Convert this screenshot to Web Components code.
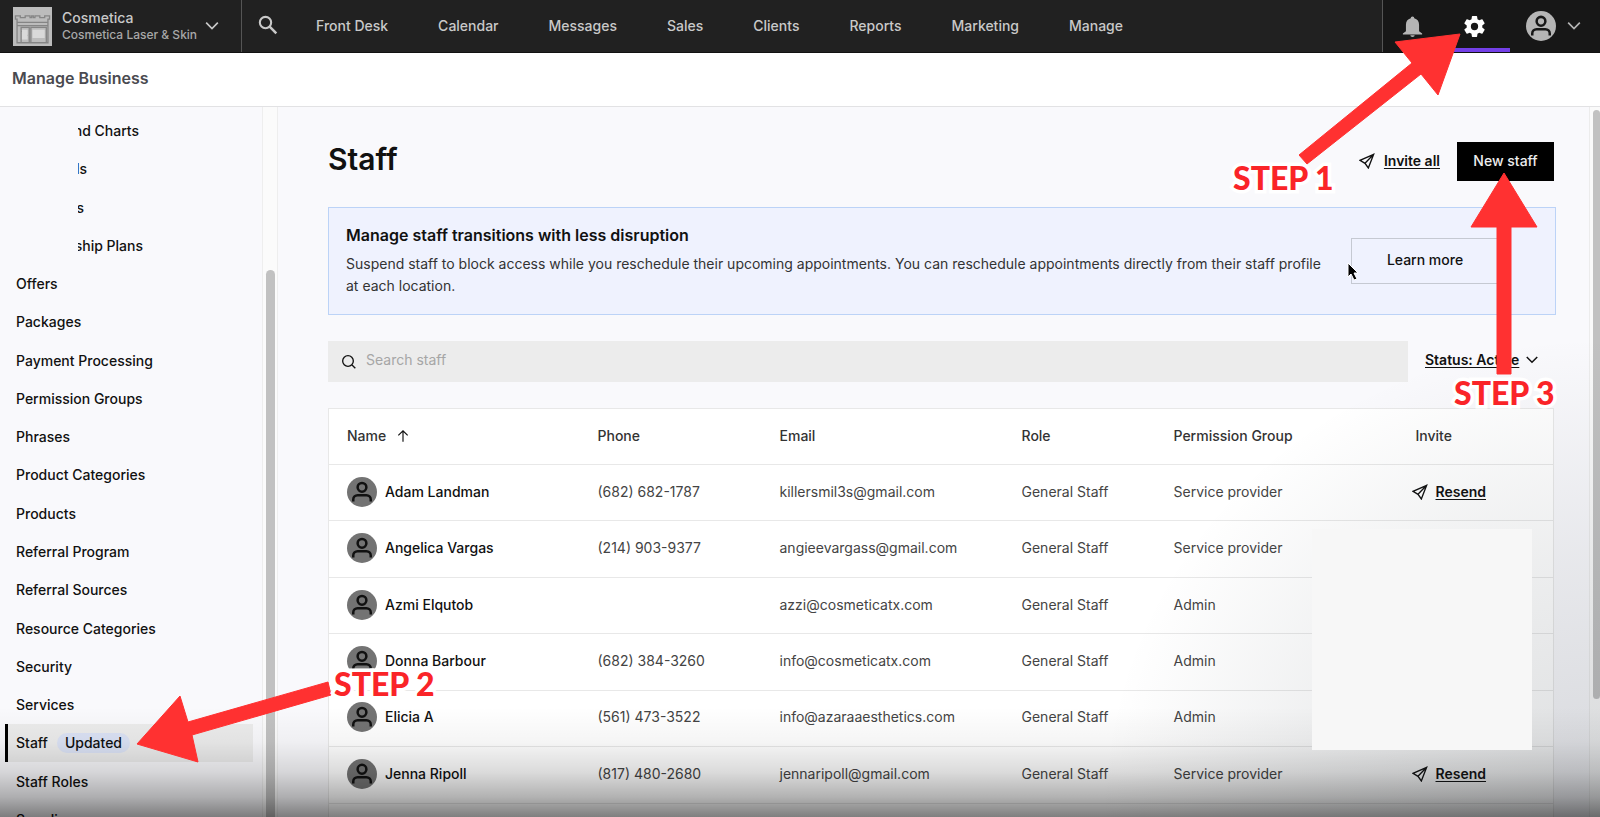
<!DOCTYPE html>
<html lang="en">
<head>
  <meta charset="utf-8">
  <title>Manage Business - Staff</title>
  <style>
    html, body { height: 100%; margin: 0; overflow: hidden; }
    body { font: 500 14px/20px Inter, "Open Sans", sans-serif; color: #111; background: #f9f9fc; }
  </style>
  <script>
    window.onload = () => {
      // icon paths, all on a 24x24 grid
      const icons = {
        chevron: '<path d="M5 8l7 7 7-7"/>',
        search: '<circle cx="10.5" cy="10.5" r="8"/><path d="M16.5 16.5l5 5"/>',
        glass: '<circle cx="9" cy="9" r="6.8" stroke-width="2.5"/><path d="M14 14l8 8" stroke-width="3"/>',
        send: '<path d="M22 2L1.500 11l7.500 4.500L14 22.500zM9 15.500L22 2"/>',
        arrow: '<path d="M12 22V3M4 11l8-8 8 8"/>',
        bell: '<path fill="currentColor" stroke="none" d="M12 .5a2 2 0 0 0-2 2.200C6.300 3.600 4.500 6.500 4.500 10v7.500L1 20v1h22v-1l-3.500-2.500V10c0-3.500-1.800-6.400-5.500-7.300A2 2 0 0 0 12 .5zM9.500 22a2.500 2 0 0 0 5 0z"/>',
        gear: '<path fill="currentColor" stroke="none" fill-rule="evenodd" d="M19.430 12.980c.04-.32.070-.64.070-.98s-.03-.66-.07-.98l2.110-1.650c.19-.15.240-.42.120-.64l-2-3.460c-.12-.22-.39-.3-.61-.22l-2.490 1c-.52-.4-1.080-.73-1.690-.98l-.38-2.650C14.460 2.180 14.250 2 14 2h-4c-.25 0-.46.180-.49.420l-.38 2.650c-.61.250-1.170.590-1.690.980l-2.490-1c-.23-.09-.49 0-.61.220l-2 3.460c-.13.220-.07.490.120.640l2.110 1.650c-.04.320-.07.650-.07.980s.03.660.070.980l-2.110 1.650c-.19.150-.24.420-.12.640l2 3.460c.12.220.390.300.610.220l2.490-1c.52.400 1.080.730 1.690.980l.38 2.650c.03.240.240.420.490.420h4c.25 0 .46-.18.490-.42l.38-2.650c.61-.25 1.170-.59 1.690-.98l2.490 1c.23.090.490 0 .61-.22l2-3.460c.12-.22.070-.49-.12-.64zM12 15.500A3.500 3.500 0 1 1 12 8.500a3.500 3.500 0 0 1 0 7z"/>',
        person: '<circle cx="12" cy="12" r="12" fill="currentColor" stroke="none"/><g stroke="var(--figure, #111)" stroke-width="2"><circle cx="12" cy="8.200" r="3.500"/><path d="M5 19.500v-1.500a3.500 3.500 0 0 1 3.500-3.500h7a3.500 3.500 0 0 1 3.500 3.500v1.500"/></g>',
        shop: '<path fill="#bcbcbc" stroke="none" d="M0 0h24v24H0z"/><g stroke="#858585" stroke-width=".8"><path d="M1.500 5.500h3v1h3v-1h3v1h1v-1h1v1h1v-1h3v1h3v-1h3v2h-1v2H2.500v-2h-1zM2.500 9.500V22h19V9.500M2.500 11.500h19M5 22v-9.500h5V22M11 22v-9.500h9.500V22M5 15h2v2.500h2"/></g><path fill="#d9d9d9" stroke="none" d="M5.500 14H9v6H5.500zM12 14h7.500v5H12z"/>'
      };

      class UiIcon extends HTMLElement {
        constructor() {
          super();
          const shadow = this.attachShadow({mode: 'open'});
          shadow.innerHTML = `<style>
    :host { display: block; flex: none; width: 16px; height: 16px; }
    svg { display: block; width: 100%; height: 100%; } </style>
<svg viewBox="0 0 24 24" fill="none" stroke="currentColor" stroke-width="2" aria-hidden="true">${icons[this.getAttribute('name')]}</svg>`;
        }
      }
      customElements.define('ui-icon', UiIcon);

      class AppHeader extends HTMLElement {
        constructor() {
          super();
          const links = ['Front Desk', 'Calendar', 'Messages', 'Sales', 'Clients', 'Reports', 'Marketing', 'Manage'];
          const shadow = this.attachShadow({mode: 'open'});
          shadow.innerHTML = `<style>
    :host { display: flex; height: 53px; background: #212121; color: #c9c9c9; box-sizing: border-box; border-bottom: 1px solid #111; }
    button { all: unset; display: flex; align-items: center; box-sizing: border-box; }
    .business { width: 242px; padding-left: 13px; border-right: 1px solid #555; }
    .logo { width: 39px; height: 39px; }
    .names { display: grid; width: 132px; margin: 0 8px 0 10px; line-height: 17px; white-space: nowrap; }
    .names small { font-size: 12px; color: #a8a8a8; }
    .business ui-icon:last-child { width: 20px; height: 20px; }
    .find { padding: 0 38px 2px 16px; }
    .find ui-icon { width: 20px; height: 20px; }
    nav { display: flex; flex: 1; align-items: center; gap: 50px; padding-bottom: 1px; }
    a { color: inherit; text-decoration: none; white-space: nowrap; }
    .tools { display: flex; width: 217px; border-left: 1px solid #555; background: #171717; }
    .tools button { justify-content: center; }
    .bell { width: 59px; }
    .bell ui-icon { width: 21px; height: 21px; color: #b5b5b5; }
    .gear { width: 68px; border-bottom: 4px solid #7440e8; padding: 4px 3px 0 0; color: #fff; }
    .gear ui-icon { width: 25px; height: 25px; }
    .user { flex: 1; gap: 8px; color: #b5b5b5; --figure: #171717; }
    .user ui-icon:first-child { width: 30px; height: 30px; }
    .user ui-icon:last-child { width: 20px; height: 20px; } </style>
<button class="business">
  <ui-icon class="logo" name="shop"></ui-icon>
  <span class="names"><span>Cosmetica</span><small>Cosmetica Laser &amp; Skin</small></span>
  <ui-icon name="chevron"></ui-icon>
</button>
<button class="find" aria-label="Search"><ui-icon name="glass"></ui-icon></button>
<nav>${links.map(text => `<a href="#">${text}</a>`).join('')}</nav>
<div class="tools">
  <button class="bell" aria-label="Notifications"><ui-icon name="bell"></ui-icon></button>
  <button class="gear" aria-label="Settings"><ui-icon name="gear"></ui-icon></button>
  <button class="user" aria-label="Account"><ui-icon name="person"></ui-icon><ui-icon name="chevron"></ui-icon></button>
</div>`;
        }
      }
      customElements.define('app-header', AppHeader);

      class SideItem extends HTMLElement {
        constructor() {
          super();
          const shadow = this.attachShadow({mode: 'open'});
          shadow.innerHTML = `<style>
    :host { display: flex; align-items: center; margin: 0 9px 0 5px; padding-left: 8px; border-left: 3px solid transparent; }
    :host([selected]) { border-color: #000; background: #ececec; }
    a { color: inherit; text-decoration: none; white-space: nowrap; }
    /* rows that are cut off on the left keep the end of their text */
    :host([cut]) a { display: flex; justify-content: flex-end; overflow: hidden; margin-left: 62px; }
    :host([cut="long"]) a { width: 65px; }
    :host([cut="wide"]) a { width: 61px; }
    :host([cut="short"]) a { width: 9px; }
    :host([cut="tiny"]) a { width: 6px; }
    ::slotted([slot="badge"]) { margin-left: 9px; padding: 0 8px; border-radius: 11px; background: #dbe2f5; } </style>
<a href="#"><slot></slot></a><slot name="badge"></slot>`;
        }
      }
      customElements.define('side-item', SideItem);

      class SideNav extends HTMLElement {
        constructor() {
          super();
          const shadow = this.attachShadow({mode: 'open'});
          shadow.innerHTML = `<style>
    :host { display: flex; width: 278px; flex: none; overflow: hidden; }
    nav { display: grid; grid-auto-rows: 1fr; flex: 1; height: 727px; padding-top: 5px; }
    .track { width: 14px; border: solid #eee; border-width: 0 1px; background: #fbfbfb; display: flex; justify-content: center; }
    .thumb { width: 9px; margin-top: 163px; border-radius: 5px 5px 0 0; background: #c1c1c1; } </style>
<nav><slot></slot></nav>
<div class="track"><div class="thumb"></div></div>`;
        }
      }
      customElements.define('side-nav', SideNav);

      class InfoBanner extends HTMLElement {
        constructor() {
          super();
          const shadow = this.attachShadow({mode: 'open'});
          shadow.innerHTML = `<style>
    :host { display: flex; align-items: center; gap: 20px; box-sizing: border-box; height: 108px; padding: 0 56px 0 17px; border: 1px solid #bcd3f7; background: #eff2fe; }
    .text { flex: 1; padding-bottom: 2px; }
    h2 { margin: 0 0 6px; font-size: 16px; line-height: 24px; font-weight: 600; }
    p { margin: 0; font-weight: 400; line-height: 22px; color: #333; }
    button { width: 148px; height: 46px; padding-bottom: 3px; border: 1px solid #c5c9d2; background: none; font: inherit; color: #111; } </style>
<div class="text"><h2><slot name="title"></slot></h2><p><slot></slot></p></div>
<button>Learn more</button>`;
        }
      }
      customElements.define('info-banner', InfoBanner);

      class StaffTable extends HTMLElement {
        constructor() {
          super();
          const staff = [
            ['Adam Landman', '(682) 682-1787', 'killersmil3s@gmail.com', 'General Staff', 'Service provider', true],
            ['Angelica Vargas', '(214) 903-9377', 'angieevargass@gmail.com', 'General Staff', 'Service provider', false],
            ['Azmi Elqutob', '', 'azzi@cosmeticatx.com', 'General Staff', 'Admin', false],
            ['Donna Barbour', '(682) 384-3260', 'info@cosmeticatx.com', 'General Staff', 'Admin', false],
            ['Elicia A', '(561) 473-3522', 'info@azaraaesthetics.com', 'General Staff', 'Admin', false],
            ['Jenna Ripoll', '(817) 480-2680', 'jennaripoll@gmail.com', 'General Staff', 'Service provider', true],
            ['', '', '', '', '', false]
          ];
          const rows = staff.map(([name, phone, email, role, group, invite]) => `<tr>
  <td>${name && `<div class="cell name"><ui-icon name="person"></ui-icon>${name}</div>`}</td>
  <td>${phone}</td><td>${email}</td><td>${role}</td><td>${group}</td>
  <td>${invite ? '<div class="cell resend"><ui-icon name="send"></ui-icon><a href="#">Resend</a></div>' : ''}</td>
</tr>`).join('');
          const shadow = this.attachShadow({mode: 'open'});
          shadow.innerHTML = `<style>
    :host { display: block; position: relative; margin-right: 2px; }
    table { width: 100%; height: 452px; table-layout: fixed; border-collapse: collapse; background: #fff; border: 1px solid #e8e8e8; }
    tr { border-top: 1px solid #e8e8e8; }
    th, td { height: 53px; padding: 0 0 2px; text-align: left; color: #444; font-weight: 400; white-space: nowrap; }
    th { font-weight: 500; color: #333; }
    th:first-child, td:first-child { padding-left: 18px; }
    .cell { display: flex; align-items: center; }
    .name { gap: 8px; color: #111; font-weight: 500; }
    .name ui-icon { width: 30px; height: 30px; color: #737373; }
    .sort { gap: 10px; }
    .sort ui-icon { width: 14px; height: 14px; color: #111; }
    .resend { gap: 8px; margin-left: -4px; color: #111; font-weight: 600; }
    a { color: inherit; text-underline-offset: 2px; }
    /* hides the invite column of the middle rows */
    .cover { position: absolute; right: 22px; top: 121px; width: 220px; height: 221px; background: #f7f7f7; z-index: 2; } </style>
<table>
  <colgroup><col style="width: 269px"><col style="width: 182px"><col style="width: 242px"><col style="width: 152px"><col style="width: 242px"><col></colgroup>
  <thead><tr><th><div class="cell sort">Name<ui-icon name="arrow"></ui-icon></div></th><th>Phone</th><th>Email</th><th>Role</th><th>Permission Group</th><th>Invite</th></tr></thead>
  <tbody>${rows}</tbody>
</table>
<div class="cover"></div>`;
        }
      }
      customElements.define('staff-table', StaffTable);

      class StaffPage extends HTMLElement {
        constructor() {
          super();
          const shadow = this.attachShadow({mode: 'open'});
          shadow.innerHTML = `<style>
    :host { display: flex; flex: 1; min-width: 0; overflow: hidden; }
    main { flex: 1; min-width: 0; padding: 35px 33px 0 50px; }
    .top { display: flex; align-items: center; height: 39px; margin-bottom: 26px; padding-right: 2px; }
    h1 { flex: 1; margin: 0; padding-bottom: 6px; font-size: 30px; line-height: 36px; font-weight: 600; }
    a { color: #111; text-underline-offset: 2px; }
    .invite { display: flex; align-items: center; gap: 9px; margin-right: 17px; padding-bottom: 2px; font-weight: 600; }
    .new { width: 97px; height: 39px; padding-bottom: 3px; border: 0; background: #000; color: #eee; font: inherit; }
    .filter { display: flex; align-items: center; height: 41px; margin: 26px 0; }
    label { display: flex; align-items: center; gap: 9px; flex: 1; height: 100%; padding-left: 13px; background: #ececec; }
    input { flex: 1; padding: 0 0 3px; border: 0; background: none; font: inherit; font-weight: 400; outline: 0; }
    input::placeholder { color: #a6a6a6; opacity: 1; }
    .status { display: flex; align-items: center; gap: 4px; width: 131px; margin-left: 17px; padding: 0 0 3px; border: 0; background: none; font: inherit; font-weight: 600; color: #111; text-align: left; white-space: nowrap; }
    .status span { text-decoration: underline; text-underline-offset: 2px; }
    .status ui-icon { width: 18px; height: 18px; }
    .track { width: 10px; border-left: 1px solid #ececec; background: #fafafa; display: flex; justify-content: flex-end; }
    .thumb { width: 7px; height: 589px; margin-top: 3px; border-radius: 4px; background: #c1c1c1; } </style>
<main>
  <div class="top"><h1>Staff</h1>
    <div class="invite"><ui-icon name="send"></ui-icon><a href="#">Invite all</a></div>
    <button class="new">New staff</button></div>
  <info-banner><span slot="title">Manage staff transitions with less disruption</span>Suspend staff to block access while you reschedule their upcoming appointments. You can reschedule appointments directly from their staff profile at each location.</info-banner>
  <div class="filter">
    <label><ui-icon name="search"></ui-icon><input type="search" placeholder="Search staff" aria-label="Search staff"></label>
    <button class="status"><span>Status: Active</span><ui-icon name="chevron"></ui-icon></button>
  </div>
  <staff-table></staff-table>
</main>
<div class="track"><div class="thumb"></div></div>`;
        }
      }
      customElements.define('staff-page', StaffPage);

      class StepMark extends HTMLElement {
        constructor() {
          super();
          const shadow = this.attachShadow({mode: 'open'});
          shadow.innerHTML = `<style>
    :host { position: absolute; z-index: 5; }
    svg { display: block; fill: #ff3131; stroke: #ff3131; stroke-linejoin: round; }
    b { position: absolute; left: var(--x); top: var(--y); font: 900 32px/32px Lato, sans-serif; color: #fa2428; white-space: nowrap; -webkit-text-stroke: 7px #fff; paint-order: stroke fill; stroke-linejoin: round; } </style>
<svg width="${this.getAttribute('w')}" height="${this.getAttribute('h')}"><polygon points="${this.getAttribute('points')}"/></svg>
<b><slot></slot></b>`;
        }
      }
      customElements.define('step-mark', StepMark);

      class AppShell extends HTMLElement {
        constructor() {
          super();
          const shadow = this.attachShadow({mode: 'open'});
          shadow.innerHTML = `<style>
    :host { display: flex; flex-direction: column; height: 100%; position: relative; overflow: hidden; }
    .title { display: flex; align-items: center; height: 54px; flex: none; box-sizing: border-box; padding: 0 0 3px 12px; border-bottom: 1px solid #e2e2e4; background: #fff; font-size: 16px; font-weight: 600; color: #4a4a50; }
    .body { display: flex; flex: 1; min-height: 0; }
    .shade { position: absolute; inset: 0; pointer-events: none; z-index: 1;
      background: linear-gradient(to top, rgba(0,0,0,.5), rgba(0,0,0,.3) 20px, rgba(0,0,0,.14) 45px, rgba(0,0,0,.04) 75px, transparent 110px),
        radial-gradient(ellipse 500px 480px at 100% 100%, rgba(30,40,50,.16), rgba(30,40,50,.08) 55%, transparent); } </style>
<slot name="header"></slot>
<div class="title">Manage Business</div>
<div class="body"><slot></slot></div>
<div class="shade"></div>
<slot name="marks"></slot>`;
        }
      }
      customElements.define('app-shell', AppShell);
    }
  </script>
  <style>
    .one { right: 139px; top: 33px; --x: -66px; --y: 129px; }
    .two { left: 136px; top: 681px; --x: 198px; --y: -13px; }
    .three { right: 62px; top: 173px; --x: -16px; --y: 204px; }
    .cursor { position: absolute; z-index: 4; right: 239px; top: 262px; }
  </style>
</head>
<body>
  <app-shell>
    <app-header slot="header"></app-header>
    <side-nav>
      <side-item cut="wide">nd Charts</side-item>
      <side-item cut="short">ls</side-item>
      <side-item cut="tiny">s</side-item>
      <side-item cut="long">ship Plans</side-item>
      <side-item>Offers</side-item>
      <side-item>Packages</side-item>
      <side-item>Payment Processing</side-item>
      <side-item>Permission Groups</side-item>
      <side-item>Phrases</side-item>
      <side-item>Product Categories</side-item>
      <side-item>Products</side-item>
      <side-item>Referral Program</side-item>
      <side-item>Referral Sources</side-item>
      <side-item>Resource Categories</side-item>
      <side-item>Security</side-item>
      <side-item>Services</side-item>
      <side-item selected>Staff<span slot="badge">Updated</span></side-item>
      <side-item>Staff Roles</side-item>
      <side-item>Suppliers</side-item>
    </side-nav>
    <staff-page></staff-page>
    <svg slot="marks" class="cursor" width="16" height="20" viewBox="0 0 16 20"><path d="M3 1v14l3-3 3 6 3-1-3-6h4z" stroke="#fff" stroke-width="1"/></svg>
    <step-mark slot="marks" class="one" w="162" h="132" points="161,1 96,9 113,30 0,122 8,131 122,41 139,62">STEP 1</step-mark>
    <step-mark slot="marks" class="two" w="197" h="82" points="1,63 44,15 52,41 192,1 195,14 56,54 62,81">STEP 2</step-mark>
    <step-mark slot="marks" class="three" w="68" h="202" points="34,0 67,54 41,54 41,201 27,201 27,54 1,54">STEP 3</step-mark>
  </app-shell>
</body>
</html>
